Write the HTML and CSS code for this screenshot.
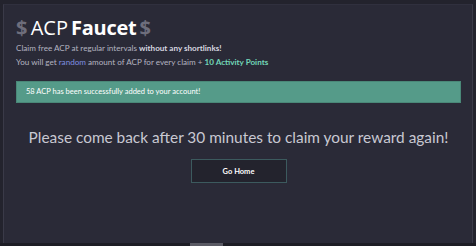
FILE: index.html
```html
<!DOCTYPE html>
<html>
<head>
<meta charset="utf-8">
<link rel="stylesheet" href="styles.css">
</head>
<body>
<div class="page">
  <div class="card">
    <h1 class="title"><span class="dollar">$</span> ACP <b>Faucet</b> <span class="dollar">$</span></h1>
    <p class="sub">Claim free ACP at regular intervals <b>without any shortlinks!</b></p>
    <p class="sub">You will get <span class="blue">random</span> amount of ACP for every claim + <b class="teal">10 Activity Points</b></p>
    <div class="alert">58 ACP has been successfully added to your account!</div>
    <div class="center">
      <h2 class="msg">Please come back after 30 minutes to claim your reward again!</h2>
      <a class="btn">Go Home</a>
    </div>
  </div>
  <div class="bottom"><span class="thumb"></span></div>
</div>
</body>
</html>
```
FILE: styles.css
```css
html, body {
  margin: 0;
  padding: 0;
  background: #23232d;
  width: 476px;
  height: 246px;
  overflow: hidden;
  font-family: "Lato", "Open Sans", sans-serif;
}
.page {
  height: 246px;
  display: flex;
  flex-direction: column;
  padding: 4px 3px 0 3px;
  box-sizing: border-box;
}
.card {
  flex: 1;
  background: #2a2a37;
  border-left: 1px solid #3a3a48;
  border-right: 1px solid #3a3a48;
  border-top: 1px solid #30303e;
  padding: 10px 11px 0 12px;
}
.title {
  margin: 0;
  font-family: "Open Sans", sans-serif;
  font-size: 20px;
  font-weight: 400;
  color: #ffffff;
  line-height: 26px;
  word-spacing: -2px;
}
.title b { font-weight: 700; letter-spacing: -0.3px; }
.dollar { color: #6e6e7c; font-weight: 700; }
.sub {
  margin: 0;
  font-size: 8.1px;
  color: #b4b4c0;
  line-height: 14px;
}
.sub b { color: #d8d8e0; font-weight: 700; }
.blue { color: #7f8ee0; }
.sub b.teal { color: #72d6b8; font-weight: 700; }
.alert {
  margin-top: 12px;
  background: #559b89;
  border: 1px solid #4a8878;
  color: #ffffff;
  font-size: 7.5px;
  height: 22px;
  line-height: 20px;
  padding: 0 9px;
  box-sizing: border-box;
}
.center {
  display: flex;
  flex-direction: column;
  align-items: center;
  padding-top: 22px;
}
.msg {
  margin: 0;
  font-family: "Lato", sans-serif;
  font-size: 15.4px;
  font-weight: 400;
  color: #c8c8d2;
  line-height: 24px;
  white-space: nowrap;
}
.btn {
  margin-top: 10px;
  width: 96px;
  height: 24px;
  box-sizing: border-box;
  border: 1.5px solid #3c5a5e;
  background: #23232d;
  color: #ffffff;
  font-size: 7.5px;
  font-weight: 700;
  display: flex;
  align-items: center;
  justify-content: center;
}
.bottom {
  height: 3px;
  background: #1d1d25;
  margin: 0 -3px;
  position: relative;
}
.thumb {
  position: absolute;
  left: 190px;
  top: 0;
  width: 33px;
  height: 3px;
  background: #5a5a64;
}
```
